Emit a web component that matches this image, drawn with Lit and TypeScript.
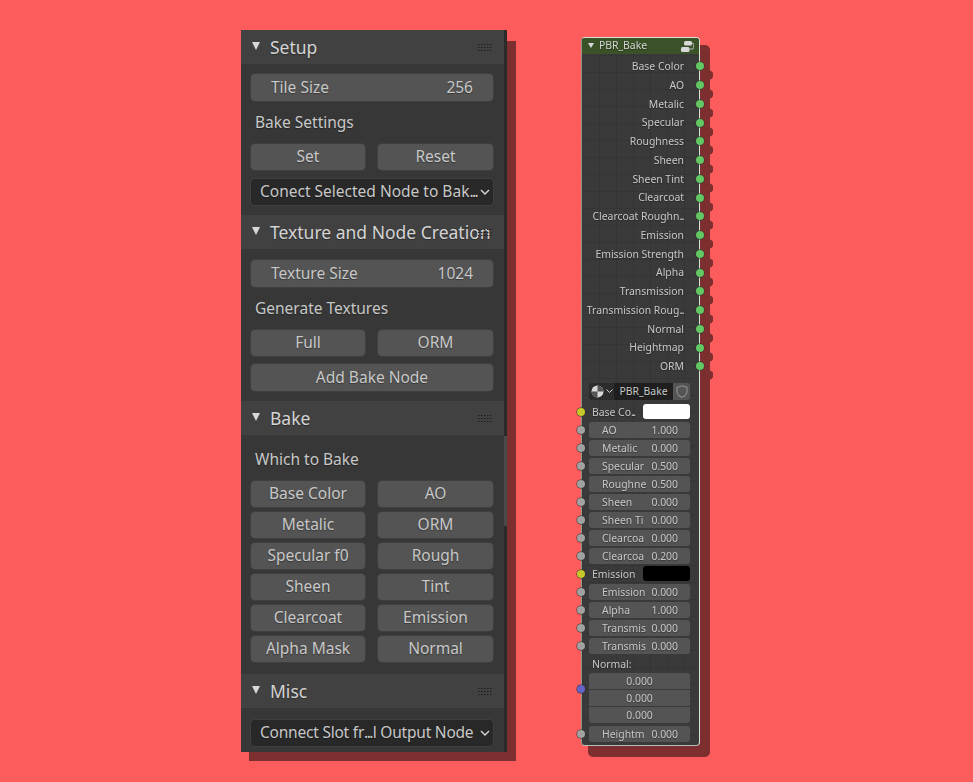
import { LitElement, html, css, svg } from "lit";
import { customElement } from "lit/decorators.js";

const OUTPUTS = [
  "Base Color", "AO", "Metalic", "Specular", "Roughness", "Sheen", "Sheen Tint", "Clearcoat",
  "Clearcoat Roughn|", "Emission", "Emission Strength", "Alpha", "Transmission",
  "Transmission Roug|", "Normal", "Heightmap", "ORM",
];

const INPUTS_A = [
  ["AO", "1.000"], ["Metalic", "0.000"], ["Specular", "0.500"], ["Roughne", "0.500"],
  ["Sheen", "0.000"], ["Sheen Ti", "0.000"], ["Clearcoa", "0.000"], ["Clearcoa", "0.200"],
];

const INPUTS_B = [
  ["Emission", "0.000"], ["Alpha", "1.000"], ["Transmis", "0.000"], ["Transmis", "0.000"],
];

const BAKE_BUTTONS = [
  ["Base Color", "AO"], ["Metalic", "ORM"], ["Specular f0", "Rough"],
  ["Sheen", "Tint"], ["Clearcoat", "Emission"], ["Alpha Mask", "Normal"],
];

const chevron = svg`<svg class="chev" width="10" height="6" viewBox="0 0 10 6"><path d="M1 1l4 4 4-4" fill="none" stroke="#d8d8d8" stroke-width="1.4"/></svg>`;

// "|" marks where blender shaved the label, its dots sit tighter than normal text
const shaved = (text: string) => {
  const [a, b] = text.split("|");
  return html`${a}<span class="dots">...</span>${b}`;
};

@customElement("app-root")
export class AppRoot extends LitElement {
  static styles = css`
    :host {
      display: block;
      min-height: 782px;
      background: #fc5c5c;
      font-family: "Noto Sans", sans-serif;
      color: #c8c8c8;
    }
    .scene {
      display: flex;
      align-items: flex-start;
      gap: 74px;
      box-sizing: border-box;
      height: 782px;
      padding: 30px 0 0 241px;
      filter: blur(0.4px);
      isolation: isolate;
      text-shadow: 0 1px 1px rgba(0, 0, 0, 0.35);
    }
    .dots { letter-spacing: -1.6px; margin-right: 1px; }
    .tight { letter-spacing: -0.22px; }
    .panel {
      position: relative;
      width: 266px;
      height: 722px;
      background: #373737;
      border-right: 3px solid #2b2b2b;
      box-sizing: border-box;
      font-size: 15.5px;
    }
    .panel::before {
      content: "";
      position: absolute;
      inset: 11px -12px -9px 8px;
      background: #7d2e2e;
      z-index: -1;
    }
    .thumb {
      position: absolute;
      top: 406px;
      right: -3px;
      width: 3px;
      height: 90px;
      background: #4a4a4a;
    }
    .head {
      display: flex;
      align-items: center;
      height: 34px;
      padding: 0 12px 0 11px;
      background: #414141;
      font-size: 17.5px;
      color: #d4d4d4;
      white-space: nowrap;
    }
    .tri { width: 0; height: 0; border: 4.5px solid transparent; border-top: 8px solid #d8d8d8; border-bottom: 0; margin: -2px 10px 0 0; flex: none; }
    .head span { flex: 1; }
    .grip { flex: none; margin-left: -14px; }
    .body {
      display: flex;
      flex-direction: column;
      padding: 10px 11px 10px 10px;
    }
    .body.second { padding-top: 11px; }
    .body.bake { padding-bottom: 12px; }
    .body.misc { padding-top: 12px; }
    .btn, .num, .drop {
      display: flex;
      align-items: center;
      justify-content: center;
      box-sizing: border-box;
      height: 26px;
      padding-bottom: 2px;
      border-radius: 4px;
      background: #545454;
      box-shadow: 0 0 0 1px #3f3f3f;
      white-space: nowrap;
    }
    .num { justify-content: space-between; padding: 0 20px 1px 20px; height: 27px; }
    .drop { justify-content: space-between; padding: 0 3px 2px 9px; background: #282828; margin-top: 9px; }
    .drop.first { margin-top: 0; }
    .chev { flex: none; margin-top: 2px; }
    .btn.wide { margin-top: 8px; height: 27px; padding-bottom: 1px; }
    .label { height: 24px; line-height: 24px; margin: 9px 0 10px 4px; }
    .label.top { margin-top: 2px; }
    .pair { display: grid; grid-template-columns: 114px 115px; gap: 5px 13px; }
    .node {
      position: relative;
      width: 119px;
      height: 709px;
      margin-top: 7px;
      box-sizing: border-box;
      border: 1px solid #d5e4d5;
      border-left-color: #8b9a8b;
      border-bottom-color: #b5c0b5;
      border-radius: 4px;
      background-color: #3a3a3a;
      background-image:
        linear-gradient(#353535 1px, transparent 1px),
        linear-gradient(90deg, #353535 1px, transparent 1px);
      background-size: 17px 17px;
      font-size: 10.4px;
    }
    .node::before {
      content: "";
      position: absolute;
      inset: 7px -11px -12px 6px;
      background: #7d2e2e;
      border-radius: 5px;
      z-index: -1;
    }
    .node-head {
      display: flex;
      align-items: center;
      height: 16px;
      padding: 0 5px 2px 6px;
      box-sizing: border-box;
      background: #3b5228;
      color: #d4d4d4;
      border-radius: 3px 3px 0 0;
    }
    .node-head .tri { border-width: 3px; border-top-width: 5px; margin: 0 5px 0 0; }
    .node-head span { flex: 1; }
    .node-head svg { flex: none; margin-bottom: -2px; }
    .outs { display: flex; flex-direction: column; margin-top: 3px; }
    .out {
      position: relative;
      height: 18.75px;
      line-height: 18.75px;
      text-align: right;
      padding-right: 15px;
      white-space: nowrap;
    }
    .sock {
      position: absolute;
      width: 8px;
      height: 8px;
      border-radius: 50%;
      top: 50%;
      margin-top: -4px;
      box-shadow: 0 0 0 0.5px #2a2a2a;
    }
    .out .sock { right: -4.5px; background: #63c763; box-shadow: 0 0 0 0.5px #2a2a2a, 9px 9px 0 0.5px #7d2e2e; }
    .ins { display: flex; flex-direction: column; margin-top: 7px; padding: 0 9px 0 7px; }
    .tmpl { display: flex; height: 17px; margin-bottom: 3px; }
    .tmpl .ico { width: 25px; display: flex; align-items: center; gap: 2px; justify-content: center; background: #2c2c2c; border-radius: 3px 0 0 3px; }
    .tmpl .name { flex: 1; background: #1f1f1f; line-height: 16px; text-align: center; }
    .tmpl .shield { width: 17px; display: flex; align-items: center; justify-content: center; background: #545454; border-radius: 0 3px 3px 0; }
    .row { position: relative; height: 18px; display: flex; align-items: center; }
    .row .sock { left: -12.5px; background: #a1a1a1; }
    .row .sock.yellow { background: #c7c729; }
    .text { padding-left: 3px; flex: 1; }
    .swatch { width: 47px; height: 15px; border-radius: 3px; background: #fff; flex: none; }
    .swatch.black { background: #000; }
    .field {
      flex: 1;
      display: flex;
      justify-content: space-between;
      align-items: center;
      height: 16px;
      padding: 0 12px 0 13px;
      background: #545454;
      border-radius: 3px;
      white-space: nowrap;
    }
    .vec { display: flex; flex-direction: column; gap: 1px; position: relative; margin-bottom: 2px; }
    .vec div { height: 16px; line-height: 16px; text-align: center; background: #545454; }
    .vec div:first-of-type { border-radius: 3px 3px 0 0; }
    .vec div:last-of-type { border-radius: 0 0 3px 3px; }
    .vec .sock { left: -12.5px; top: 16px; background: #6363c7; }
  `;

  private grip() {
    return svg`<svg class="grip" width="14" height="7" viewBox="0 0 14 7">
      ${[0, 3, 6, 9, 12].map(x => [0, 3, 6].map(y => svg`<rect x=${x} y=${y} width="1.5" height="1" fill="#1f1f1f"/>`))}
    </svg>`;
  }

  private head(title: string) {
    return html`<div class="head"><i class="tri"></i><span>${title}</span>${this.grip()}</div>`;
  }

  private panel() {
    return html`<div class="panel">
      ${this.head("Setup")}
      <div class="body">
        <div class="num"><span>Tile Size</span><span>256</span></div>
        <div class="label">Bake Settings</div>
        <div class="pair"><div class="btn">Set</div><div class="btn">Reset</div></div>
        <div class="drop"><span>${shaved("Conect Selected Node to Bak|")}</span>${chevron}</div>
      </div>
      ${this.head("Texture and Node Creation")}
      <div class="body second">
        <div class="num"><span>Texture Size</span><span>1024</span></div>
        <div class="label">Generate Textures</div>
        <div class="pair"><div class="btn">Full</div><div class="btn">ORM</div></div>
        <div class="btn wide">Add Bake Node</div>
      </div>
      ${this.head("Bake")}
      <div class="body bake">
        <div class="label top">Which to Bake</div>
        <div class="pair">${BAKE_BUTTONS.flat().map(b => html`<div class="btn">${b}</div>`)}</div>
      </div>
      ${this.head("Misc")}
      <div class="body misc">
        <div class="drop first"><span class="tight">${shaved("Connect Slot fr|l Output Node")}</span>${chevron}</div>
      </div>
      <div class="thumb"></div>
    </div>`;
  }

  private fieldRow([name, value]: string[]) {
    return html`<div class="row"><i class="sock"></i><div class="field"><span>${name}</span><span>${value}</span></div></div>`;
  }

  private node() {
    return html`<div class="node">
      <div class="node-head">
        <i class="tri"></i><span>PBR_Bake</span>
        <svg width="13" height="11" viewBox="0 0 13 11">
          <rect x="3" y="0" width="8" height="4.500" rx="1.500" fill="#d8d8d8"/>
          <rect x="0" y="6" width="8.500" height="5" rx="1.500" fill="#d8d8d8"/>
          <path d="M11 2.200h.5a1.200 1.200 0 0 1 1.200 1.200v3.400a1.200 1.200 0 0 1-1.200 1.200H8.500" fill="none" stroke="#bdbdbd"/>
        </svg>
      </div>
      <div class="outs">${OUTPUTS.map(o => html`<div class="out">${o.includes("|") ? shaved(o) : o}<i class="sock"></i></div>`)}</div>
      <div class="ins">
        <div class="tmpl">
          <div class="ico">
            <svg width="13" height="13" viewBox="0 0 13 13">
              <circle cx="6.500" cy="6.500" r="6" fill="#d8d8d8"/>
              <path d="M6.500 .5a6 6 0 0 1 6 6h-6zM6.500 6.500v6a6 6 0 0 1-6-6z" fill="#555"/>
            </svg>
            <svg width="7" height="5" viewBox="0 0 7 5"><path d="M.5 .5l3 3 3-3" fill="none" stroke="#d8d8d8"/></svg>
          </div>
          <div class="name">PBR_Bake</div>
          <div class="shield">
            <svg width="12" height="13" viewBox="0 0 12 13"><path d="M6 .8L11 2.500v3.500c0 3-2.200 5.200-5 6.300C3.200 11.200 1 9 1 6V2.500z" fill="none" stroke="#8a8a8a" stroke-width="1.200"/></svg>
          </div>
        </div>
        <div class="row"><i class="sock yellow"></i><span class="text">Base Co<span class="dots">...</span></span><div class="swatch"></div></div>
        ${INPUTS_A.map(r => this.fieldRow(r))}
        <div class="row"><i class="sock yellow"></i><span class="text">Emission</span><div class="swatch black"></div></div>
        ${INPUTS_B.map(r => this.fieldRow(r))}
        <div class="row"><span class="text">Normal:</span></div>
        <div class="vec"><i class="sock"></i><div>0.000</div><div>0.000</div><div>0.000</div></div>
        ${this.fieldRow(["Heightm", "0.000"])}
      </div>
    </div>`;
  }

  render() {
    return html`<div class="scene">${this.panel()}${this.node()}</div>`;
  }
}
